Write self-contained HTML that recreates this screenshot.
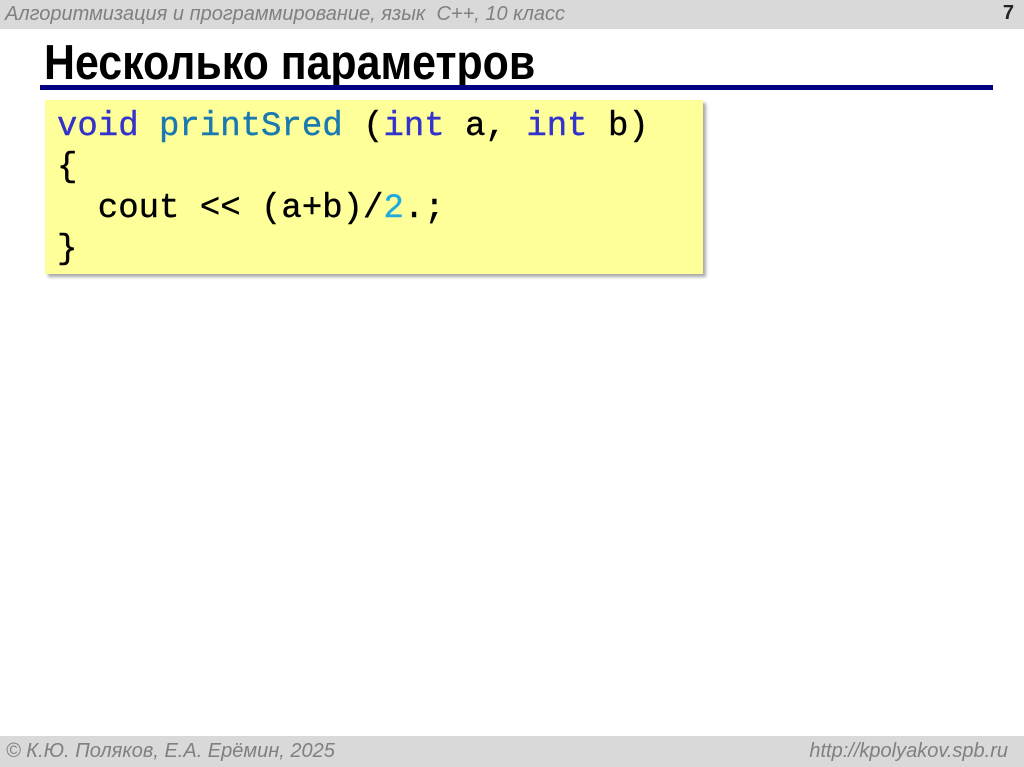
<!DOCTYPE html>
<html><head><meta charset="utf-8"><style>
body{margin:0;width:1024px;height:767px;background:#fff;position:relative;overflow:hidden;font-family:"Liberation Sans",sans-serif}
.hdr{position:absolute;left:0;top:0;width:1024px;height:29px;background:#d9d9d9}
.hdr .t{position:absolute;left:5px;top:3px;font-size:20px;font-style:italic;color:#808080;white-space:nowrap}
.hdr .n{position:absolute;right:10px;top:2px;font-size:20px;font-weight:bold;color:#222}
.title{position:absolute;left:44px;top:35px;font-size:49px;font-weight:bold;color:#000;transform:scaleX(.875);transform-origin:left;white-space:nowrap}
.line{position:absolute;left:40px;top:85px;width:953px;height:5px;background:#000080}
.code{position:absolute;left:45px;top:100px;width:658px;height:174px;background:#ffff99;box-shadow:3px 3px 3px #aaa}
pre{margin:0;position:absolute;left:12px;top:7px;font-family:"Liberation Mono",monospace;font-size:34px;line-height:41px;color:#000;-webkit-text-stroke:0.4px currentColor}
.k{color:#3333cc}.f{color:#1a7ab0}.d{color:#22aadd}
.ftr{position:absolute;left:0;top:736px;width:1024px;height:31px;background:#d9d9d9;color:#808080;font-size:20px;font-style:italic}
.ftr .l{position:absolute;left:6px;top:4px;white-space:nowrap}
.ftr .r{position:absolute;right:16px;top:4px;white-space:nowrap}
</style></head><body>
<div class="hdr"><div class="t">Алгоритмизация и программирование, язык&nbsp; C++, 10 класс</div><div class="n">7</div></div>
<div class="title">Несколько параметров</div>
<div class="line"></div>
<div class="code"><pre><span class="k">void</span> <span class="f">printSred</span> (<span class="k">int</span> a, <span class="k">int</span> b)
{
  cout &lt;&lt; (a+b)/<span class="d">2</span>.;
}</pre></div>
<div class="ftr"><div class="l">© К.Ю. Поляков, Е.А. Ерёмин, 2025</div><div class="r">http://kpolyakov.spb.ru</div></div>
</body></html>
